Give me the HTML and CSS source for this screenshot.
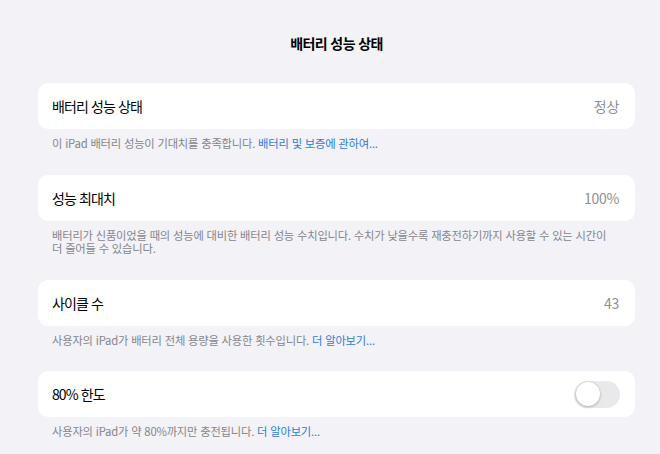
FILE: index.html
```html
<!DOCTYPE html>
<html lang="ko">
<head>
<meta charset="utf-8">
<link rel="stylesheet" href="styles.css">
</head>
<body>
<div class="page">
  <h1 class="title">배터리 성능 상태</h1>

  <section class="group">
    <div class="card">
      <span class="label">배터리 성능 상태</span>
      <span class="value">정상</span>
    </div>
    <p class="note">이 iPad 배터리 성능이 기대치를 충족합니다. <a class="link">배터리 및 보증에 관하여...</a></p>
  </section>

  <section class="group">
    <div class="card">
      <span class="label">성능 최대치</span>
      <span class="value">100%</span>
    </div>
    <p class="note">배터리가 신품이었을 때의 성능에 대비한 배터리 성능 수치입니다. 수치가 낮을수록 재충전하기까지 사용할 수 있는 시간이 더 줄어들 수 있습니다.</p>
  </section>

  <section class="group">
    <div class="card">
      <span class="label">사이클 수</span>
      <span class="value">43</span>
    </div>
    <p class="note">사용자의 iPad가 배터리 전체 용량을 사용한 횟수입니다. <a class="link">더 알아보기...</a></p>
  </section>

  <section class="group">
    <div class="card">
      <span class="label">80% 한도</span>
      <span class="toggle"><span class="knob"></span></span>
    </div>
    <p class="note">사용자의 iPad가 약 80%까지만 충전됩니다. <a class="link">더 알아보기...</a></p>
  </section>
</div>
</body>
</html>
```

FILE: styles.css
```css
html, body {
  margin: 0;
  padding: 0;
  background: #f2f2f7;
}
body {
  font-family: "Noto Sans CJK KR", "Noto Sans", sans-serif;
  color: #000;
}
.page {
  padding: 0 25px 0 38px;
}
.title {
  margin: 0;
  height: 83px;
  line-height: 86px;
  text-align: center;
  font-size: 14px;
  font-weight: 700;
  letter-spacing: -0.6px;
}
.group {
  margin-bottom: 24px;
}
.card {
  background: #fff;
  border-radius: 10px;
  height: 46px;
  display: flex;
  align-items: center;
  justify-content: space-between;
  padding: 0 16px 0 14px;
}
.label {
  font-size: 14px;
  letter-spacing: -0.9px;
}
.value {
  font-size: 14px;
  color: #8e8e93;
  letter-spacing: -0.3px;
}
.note {
  margin: 8px 0 0 14px;
  padding-right: 16px;
  font-size: 11.3px;
  line-height: 13.6px;
  color: #86868b;
  letter-spacing: -0.2px;
}
.link {
  color: #2f7cd6;
}
.toggle {
  width: 46px;
  height: 27px;
  border-radius: 14px;
  background: #e9e9eb;
  display: flex;
  align-items: center;
  padding: 0 2px;
  box-sizing: border-box;
  margin-right: -1px;
}
.knob {
  width: 24px;
  height: 24px;
  border-radius: 50%;
  background: #fff;
  box-shadow: 0 1px 3px rgba(0,0,0,0.25), 0 0 0 0.5px rgba(0,0,0,0.06);
}
```
